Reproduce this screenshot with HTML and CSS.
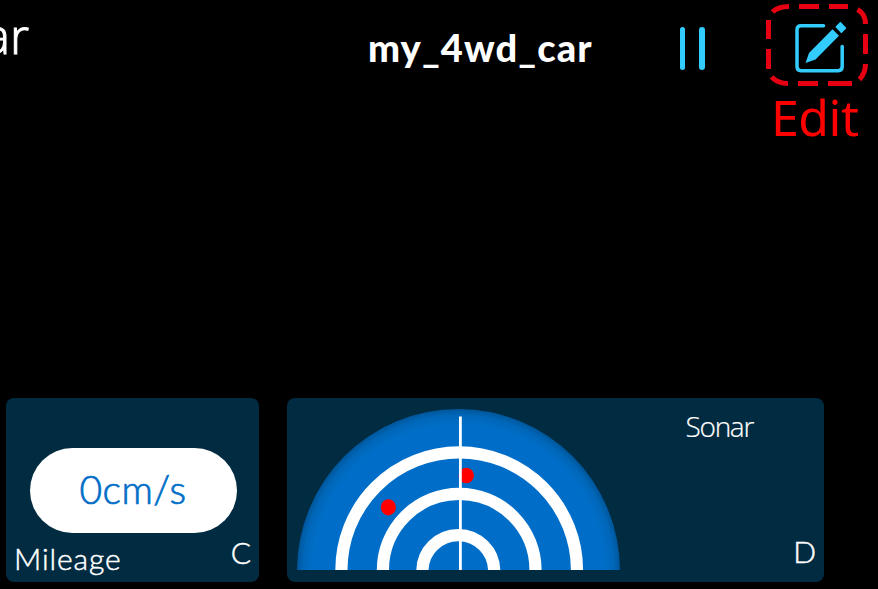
FILE: index.html
```html
<!DOCTYPE html>
<html lang="en">
<head>
<meta charset="utf-8">
<title>my_4wd_car</title>
<link rel="stylesheet" href="styles.css">
</head>
<body>
<header class="topbar">
  <div class="device"><span>ar</span></div>
  <h1 class="title">my_4wd_car</h1>
  <div class="pause"><i></i><i></i></div>
  <div class="edit">
    <svg class="edit-icon" width="102" height="86" viewBox="766 0 102 86">
      <g fill="none" stroke="#e60012" stroke-width="5">
        <path d="M772.5 12Q778 6.5 789 6.5M799 6.5H819M829 6.5H848M857.500 9.500Q865.500 14 865.500 24M865.500 34V54M865.500 64Q865.500 73 859.500 79.500M852 83.500H828M818 83.500H798M788 83.500Q778 83.500 771.500 77M768.500 69V49M768.500 39V20"/>
      </g>
      <path d="M823.500 25.700H801Q797 25.700 797 29.700V66.500Q797 70.700 801 70.700H838Q842.200 70.700 842.200 66.500V46.500" fill="none" stroke="#3cf" stroke-width="3.500" stroke-linecap="round"/>
      <path d="M805.500 63L809 53L832.500 29.300L839 35.800L815.500 59.500Z" fill="#3cf"/>
      <path d="M836.500 27L840.500 23L845.300 28L841.300 32Z" fill="#3cf" stroke="#3cf" stroke-width="1.800" stroke-linejoin="round"/>
    </svg>
    <span class="edit-label">Edit</span>
  </div>
</header>
<main class="panels">
  <section class="panel mileage">
    <div class="speed"><span>0cm/s</span></div>
    <div class="foot"><span class="name">Mileage</span><span class="port">C</span></div>
  </section>
  <section class="panel sonar">
    <svg class="radar" width="323" height="161" viewBox="297 409 323 161">
      <defs>
        <radialGradient id="g" gradientUnits="userSpaceOnUse" cx="458.500" cy="570.500" r="161.500">
          <stop offset=".9" stop-color="#006ec8"/>
          <stop offset=".96" stop-color="#0067b9"/>
          <stop offset="1" stop-color="#00569a"/>
        </radialGradient>
      </defs>
      <circle cx="458.500" cy="570.500" r="161.500" fill="url(#g)"/>
      <g fill="none" stroke="#fff" stroke-width="12.200">
        <circle cx="459.200" cy="570.200" r="117.800"/>
        <circle cx="459.200" cy="570.200" r="76.300"/>
        <circle cx="458.300" cy="571" r="35.900"/>
      </g>
      <ellipse cx="388.400" cy="507.300" rx="7.500" ry="8.100" fill="red"/>
      <circle cx="466.300" cy="475.500" r="7.700" fill="red"/>
      <path d="M460.400 416.500V570.500" stroke="#fff" stroke-width="2.800"/>
    </svg>
    <div class="side"><span class="sonar-name">Sonar</span><span class="port">D</span></div>
  </section>
</main>
</body>
</html>
```
FILE: styles.css
```css
* { box-sizing: border-box; }
body {
  margin: 0;
  width: 878px;
  height: 589px;
  overflow: hidden;
  background: #000;
  color: #fff;
  font-family: Lato, "Liberation Sans", sans-serif;
  display: flex;
  flex-direction: column;
}
span { white-space: nowrap; }
.topbar { display: flex; align-items: flex-start; height: 398px; }
.device {
  width: 29px;
  display: flex;
  justify-content: flex-end;
  font: 300 49px/71px "Open Sans", sans-serif;
  -webkit-text-stroke: 1px currentColor;
}
.title {
  margin: 0 0 0 339px;
  width: 312px;
  font-size: 38px;
  font-weight: 900;
  line-height: 94px;
  letter-spacing: 1.100px;
}
.pause { display: flex; gap: 14px; padding-top: 27px; width: 86px; }
.pause i { width: 5.300px; height: 43px; border-radius: 3px; background: #3cf; }
.edit { width: 102px; display: flex; flex-direction: column; }
.edit-icon { display: block; }
.edit-label {
  padding-left: 5px;
  color: red;
  font: 400 50px/63px "Noto Sans", sans-serif;
  letter-spacing: -.500px;
}
.panels { display: flex; gap: 28px; padding-left: 6px; }
.panel { height: 184px; border-radius: 8px; background: #002b41; }
.mileage { width: 253px; padding-top: 50px; }
.speed {
  width: 207px;
  height: 85px;
  margin-left: 23.500px;
  border-radius: 43px;
  background: #fff;
  color: #006ec8;
  font-size: 39px;
  font-weight: 300;
  line-height: 82px;
  letter-spacing: .500px;
  text-align: center;
  -webkit-text-stroke: .700px currentColor;
}
.foot { display: flex; justify-content: space-between; padding: 0 8px; }
.name { font-size: 30px; font-weight: 300; line-height: 51px; letter-spacing: .900px; -webkit-text-stroke: .500px currentColor; }
.port { font-size: 30px; font-weight: 300; line-height: 38px; -webkit-text-stroke: .500px currentColor; }
.sonar { width: 537px; display: flex; justify-content: space-between; padding: 11px 8px 0 10px; }
.side { display: flex; flex-direction: column; align-items: flex-end; }
.sonar-name {
  margin: 0 63px 89px 0;
  font: 300 28px/34px "Open Sans", sans-serif;
  letter-spacing: -1.300px;
  -webkit-text-stroke: .200px currentColor;
}
```
